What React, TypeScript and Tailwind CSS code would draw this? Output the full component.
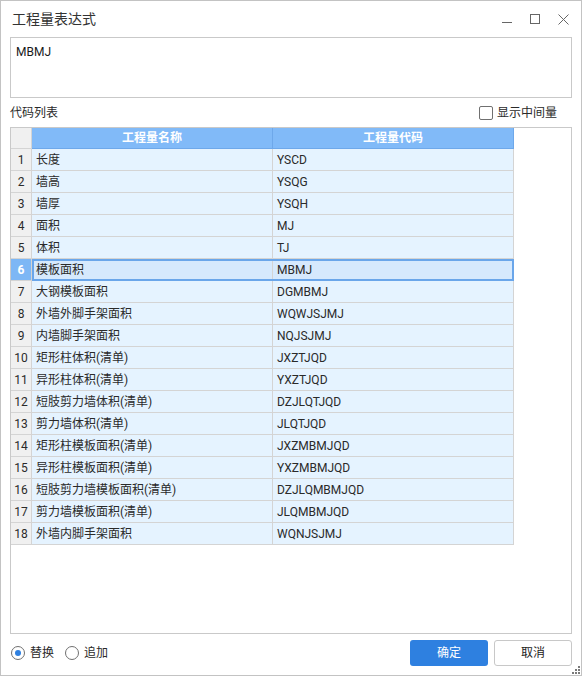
import React from 'react'

interface Row {
  name: string
  code: string
}

const rows: Row[] = [
  { name: '长度', code: 'YSCD' },
  { name: '墙高', code: 'YSQG' },
  { name: '墙厚', code: 'YSQH' },
  { name: '面积', code: 'MJ' },
  { name: '体积', code: 'TJ' },
  { name: '模板面积', code: 'MBMJ' },
  { name: '大钢模板面积', code: 'DGMBMJ' },
  { name: '外墙外脚手架面积', code: 'WQWJSJMJ' },
  { name: '内墙脚手架面积', code: 'NQJSJMJ' },
  { name: '矩形柱体积(清单)', code: 'JXZTJQD' },
  { name: '异形柱体积(清单)', code: 'YXZTJQD' },
  { name: '短肢剪力墙体积(清单)', code: 'DZJLQTJQD' },
  { name: '剪力墙体积(清单)', code: 'JLQTJQD' },
  { name: '矩形柱模板面积(清单)', code: 'JXZMBMJQD' },
  { name: '异形柱模板面积(清单)', code: 'YXZMBMJQD' },
  { name: '短肢剪力墙模板面积(清单)', code: 'DZJLQMBMJQD' },
  { name: '剪力墙模板面积(清单)', code: 'JLQMBMJQD' },
  { name: '外墙内脚手架面积', code: 'WQNJSJMJ' }
]

const selectedIndex = 5

function WindowControls() {
  return (
    <div className="ml-auto flex items-center gap-[18px] text-[#666]">
      <svg width="10" height="10" viewBox="0 0 10 10">
        <line x1="0" y1="8.5" x2="10" y2="8.5" stroke="currentColor" strokeWidth="1" />
      </svg>
      <svg width="10" height="10" viewBox="0 0 10 10">
        <rect x="0.5" y="0.5" width="9" height="9" fill="none" stroke="currentColor" strokeWidth="1" />
      </svg>
      <svg width="11" height="11" viewBox="0 0 11 11">
        <path d="M0.5 0.5 L10.5 10.5 M10.5 0.5 L0.5 10.5" stroke="currentColor" strokeWidth="1" />
      </svg>
    </div>
  )
}

export default function App() {
  return (
    <div className="relative w-[582px] h-[676px] bg-white border border-[#c3c3c3] flex flex-col font-['Roboto','Noto_Sans_CJK_SC',sans-serif] text-[#2a2a2a]">
      {/* title bar */}
      <div className="h-[36px] flex items-center pl-[11px] pr-[12px]">
        <span className="text-[14px] leading-none text-[#333]">工程量表达式</span>
        <WindowControls />
      </div>

      {/* expression box */}
      <div className="mx-[9px] h-[61px] border border-[#c9c9c9] px-[5px] pt-[6px] text-[12px] leading-[16px] text-[#1a1a1a]">
        MBMJ
      </div>

      {/* list label row */}
      <div className="mx-[9px] h-[29px] flex items-center justify-between text-[12px]">
        <span>代码列表</span>
        <label className="flex items-center gap-[4px] pr-[15px]">
          <span className="w-[14px] h-[14px] border border-[#707070] rounded-[2px] bg-white" />
          <span>显示中间量</span>
        </label>
      </div>

      {/* grid */}
      <div className="mx-[9px] h-[507px] border border-[#c9c9c9] relative text-[12px]">
        <div className="flex h-[21px]">
          <div className="w-[21px] bg-[#f0f0f0] border-r border-b border-[#d4d4d4]" />
          <div className="w-[241px] bg-[#81baf8] border-r border-b border-[#6ea8ea] flex items-center justify-center text-white font-bold">
            工程量名称
          </div>
          <div className="w-[241px] bg-[#81baf8] border-r border-b border-[#6ea8ea] flex items-center justify-center text-white font-bold">
            工程量代码
          </div>
        </div>
        {rows.map((row, i) => {
          const selected = i === selectedIndex
          return (
            <div key={i} className="flex h-[22px]">
              <div
                className={`w-[21px] border-r border-b border-[#d4d4d4] flex items-center justify-center ${
                  selected ? 'bg-[#7db7f5] text-white font-bold' : 'bg-[#f0f0f0]'
                }`}
              >
                {i + 1}
              </div>
              <div
                className={`w-[241px] border-r border-b border-[#d4d4d4] flex items-center pl-[4px] whitespace-nowrap ${
                  selected ? 'bg-[#d6e9fd]' : 'bg-[#e5f3ff]'
                }`}
              >
                {row.name}
              </div>
              <div
                className={`w-[241px] border-r border-b border-[#d4d4d4] flex items-center pl-[4px] ${
                  selected ? 'bg-[#d6e9fd]' : 'bg-[#e5f3ff]'
                }`}
              >
                {row.code}
              </div>
            </div>
          )
        })}
        {/* selected row outline */}
        <div className="absolute left-[21px] top-[131px] w-[482px] h-[22px] border-2 border-[#6aa6ea] pointer-events-none" />
      </div>

      {/* footer */}
      <div className="flex-1 flex items-start pt-[6px] pl-[10px] pr-[9px] text-[12px]">
        <div className="h-[26px] flex items-center">
          <span className="w-[14px] h-[14px] rounded-full border border-[#707070] bg-white flex items-center justify-center">
            <span className="w-[6px] h-[6px] rounded-full bg-[#2f80e0]" />
          </span>
          <span className="ml-[5px]">替换</span>
          <span className="ml-[11px] w-[14px] h-[14px] rounded-full border border-[#707070] bg-white" />
          <span className="ml-[5px]">追加</span>
        </div>
        <div className="ml-auto flex gap-[6px]">
          <button className="w-[78px] h-[26px] rounded-[3px] bg-[#2e80e0] text-white text-[12px]">确定</button>
          <button className="w-[78px] h-[26px] rounded-[3px] bg-white border border-[#c8c8c8] text-[#222] text-[12px]">
            取消
          </button>
        </div>
      </div>

      {/* resize grip */}
      <svg className="absolute right-[1px] bottom-[1px]" width="8" height="8" viewBox="0 0 8 8">
        <rect x="6" y="0" width="2" height="2" fill="#7a7a7a" />
        <rect x="3" y="3" width="2" height="2" fill="#7a7a7a" />
        <rect x="6" y="3" width="2" height="2" fill="#7a7a7a" />
        <rect x="0" y="6" width="2" height="2" fill="#7a7a7a" />
        <rect x="3" y="6" width="2" height="2" fill="#7a7a7a" />
        <rect x="6" y="6" width="2" height="2" fill="#7a7a7a" />
      </svg>
    </div>
  )
}
